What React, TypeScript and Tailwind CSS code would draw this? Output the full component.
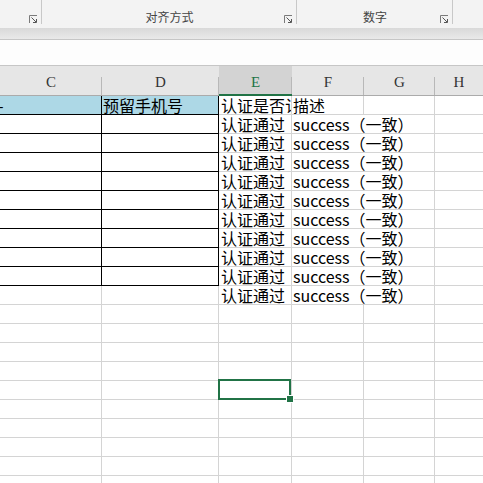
const cols = [
  { key: "C", w: "w-[102px]" },
  { key: "D", w: "w-[117px]" },
  { key: "E", w: "w-[73px]" },
  { key: "F", w: "w-[72px]" },
  { key: "G", w: "w-[71px]" },
  { key: "H", w: "flex-1" },
]

const cellFont = { fontFamily: '"Noto Sans CJK SC", "Noto Sans", sans-serif' }

function Launcher() {
  return (
    <svg width="9" height="9" viewBox="0 0 9 9" className="mb-[4px]">
      <path d="M0.5 8V0.5H8" fill="none" stroke="#7a7a7a" />
      <path d="M2.5 2.5L7 7" stroke="#555" />
      <path d="M4 7.5H7.5V4" fill="none" stroke="#555" />
    </svg>
  )
}

function Sep() {
  return <div className="absolute right-0 top-0 h-[24px] w-px bg-[#c8c8c8]" />
}

function Ribbon() {
  return (
    <div className="flex h-[28px] bg-[#f3f3f3] text-[12px] text-[#444]" style={cellFont}>
      <div className="relative flex w-[42px] items-end justify-end pr-[4px]">
        <Launcher />
        <Sep />
      </div>
      <div className="relative flex w-[255px] items-end justify-center pb-[2px]">
        <span>对齐方式</span>
        <div className="absolute right-[4px] bottom-0">
          <Launcher />
        </div>
        <Sep />
      </div>
      <div className="relative flex w-[156px] items-end justify-center pb-[2px]">
        <span>数字</span>
        <div className="absolute right-[4px] bottom-0">
          <Launcher />
        </div>
        <Sep />
      </div>
      <div className="flex-1" />
    </div>
  )
}

function HeaderRow() {
  return (
    <div className="flex h-[30px] bg-[#e6e6e6] border-b border-[#ababab] text-[15px] text-[#333]" style={{ fontFamily: '"Liberation Serif", serif' }}>
      {cols.map((c) => {
        const sel = c.key === "E"
        return (
          <div
            key={c.key}
            className={`${c.w} relative flex items-end justify-center pb-[2px] ${sel ? "bg-[#d3d3d3] text-[#217346]" : ""}`}
          >
            {c.key}
            {c.key !== "H" && <div className="absolute right-0 bottom-0 h-[18px] w-px bg-[#b8b8b8]" />}
            {sel && <div className="absolute left-0 right-0 -bottom-px h-[2px] bg-[#217346]" />}
          </div>
        )
      })}
    </div>
  )
}

function Row({ n }: { n: number }) {
  const bordered = n <= 10
  const grid = "border-r border-b border-[#d4d4d4]"
  const black = "border-r border-b border-black"
  const txt = "h-[19px] leading-[19px] text-[16px] whitespace-nowrap text-black"
  return (
    <div className={`relative flex ${n === 16 ? "z-10" : ""}`} style={cellFont}>
      <div className={`w-[102px] ${txt} ${bordered ? black : grid} ${n === 1 ? "bg-[#add8e6]" : ""}`}>
        {n === 1 && <span className="-ml-[2px]">-</span>}
      </div>
      <div className={`w-[117px] ${txt} pl-[1px] ${bordered ? black : grid} ${n === 1 ? "bg-[#add8e6]" : ""}`}>
        {n === 1 && "预留手机号"}
      </div>
      <div className={`relative w-[73px] ${txt} ${grid}`}>
        <div className="h-full overflow-hidden pl-[2px]">
          {n === 1 && "认证是否认证"}
          {n >= 2 && n <= 11 && "认证通过"}
        </div>
        {n === 16 && (
          <div className="absolute -top-[2px] -left-px right-0 -bottom-px border-2 border-[#217346]">
            <div className="absolute -right-[5px] -bottom-[5px] h-[8px] w-[8px] border border-white bg-[#217346]" />
          </div>
        )}
      </div>
      {n >= 2 && n <= 11 ? (
        <div className={`w-[143px] pl-[1px] ${txt} ${grid}`}>success（一致）</div>
      ) : (
        <>
          <div className={`w-[72px] pl-[1px] ${txt} ${grid}`}>{n === 1 && "描述"}</div>
          <div className={`w-[71px] ${txt} ${grid}`} />
        </>
      )}
      <div className={`flex-1 ${txt} border-b border-[#d4d4d4]`} />
    </div>
  )
}

export default function App() {
  const rows = Array.from({ length: 21 }, (_, i) => i + 1)
  return (
    <div className="h-[483px] w-[483px] overflow-hidden bg-white">
      <Ribbon />
      <div className="h-[11px] bg-gradient-to-b from-[#d9d9d9] to-[#e9e9e9]" />
      <div className="h-[27px] border-y border-[#c6c6c6] bg-[#fdfdfd]" />
      <HeaderRow />
      {rows.map((n) => (
        <Row key={n} n={n} />
      ))}
    </div>
  )
}
